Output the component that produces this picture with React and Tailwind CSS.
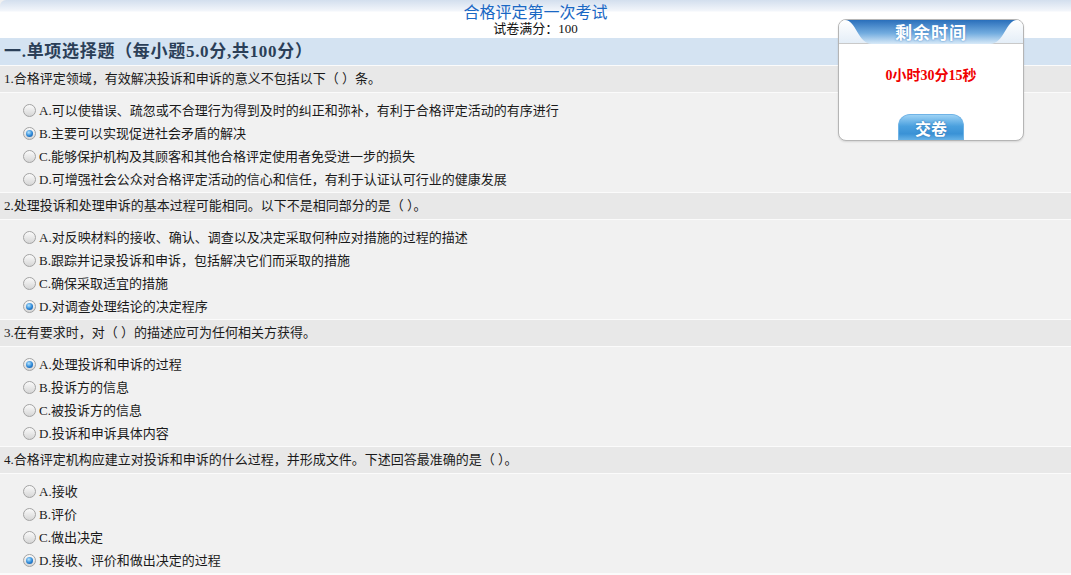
import React from "react";

const font = "font-['Liberation_Serif','Noto_Sans_CJK_SC',serif]";

const questions = [
  {
    title: "1.合格评定领域，有效解决投诉和申诉的意义不包括以下（ ）条。",
    answer: 1,
    options: [
      "A.可以使错误、疏忽或不合理行为得到及时的纠正和弥补，有利于合格评定活动的有序进行",
      "B.主要可以实现促进社会矛盾的解决",
      "C.能够保护机构及其顾客和其他合格评定使用者免受进一步的损失",
      "D.可增强社会公众对合格评定活动的信心和信任，有利于认证认可行业的健康发展",
    ],
  },
  {
    title: "2.处理投诉和处理申诉的基本过程可能相同。以下不是相同部分的是（ ）。",
    answer: 3,
    options: [
      "A.对反映材料的接收、确认、调查以及决定采取何种应对措施的过程的描述",
      "B.跟踪并记录投诉和申诉，包括解决它们而采取的措施",
      "C.确保采取适宜的措施",
      "D.对调查处理结论的决定程序",
    ],
  },
  {
    title: "3.在有要求时，对（ ）的描述应可为任何相关方获得。",
    answer: 0,
    options: [
      "A.处理投诉和申诉的过程",
      "B.投诉方的信息",
      "C.被投诉方的信息",
      "D.投诉和申诉具体内容",
    ],
  },
  {
    title: "4.合格评定机构应建立对投诉和申诉的什么过程，并形成文件。下述回答最准确的是（ ）。",
    answer: 3,
    options: ["A.接收", "B.评价", "C.做出决定", "D.接收、评价和做出决定的过程"],
  },
];

function Radio({ checked }) {
  return (
    <span className="w-[13px] h-[13px] rounded-full border border-[#a3a3a3] bg-[linear-gradient(to_bottom,#fafafa,#d6d6d6)] flex items-center justify-center shrink-0">
      {checked && (
        <span className="w-[7px] h-[7px] rounded-full bg-[radial-gradient(circle_at_40%_35%,#b8e6ff,#2a86d6_55%,#0d4690)]" />
      )}
    </span>
  );
}

function Question({ q }) {
  return (
    <div>
      <div className="h-[28px] bg-[#e8e8e8] border-y border-[#fbfbfb] flex items-center pl-[4px] text-[13px] text-[#1a1a1a]">
        {q.title}
      </div>
      <div className="bg-[#f1f1f1] pt-[6px] pb-[1px]">
        {q.options.map((o, i) => (
          <div key={i} className="h-[23px] flex items-center pl-[23px] gap-[3px] text-[13px] text-[#1a1a1a]">
            <Radio checked={i === q.answer} />
            <span>{o}</span>
          </div>
        ))}
      </div>
    </div>
  );
}

function Timer() {
  return (
    <div className="absolute top-[19px] left-[838px] w-[186px] h-[122px] bg-white border border-[#b5b5b5] rounded-[8px] overflow-hidden flex flex-col shadow-[0_1px_2px_rgba(0,0,0,0.12)]">
      <div className="relative h-[24px] shrink-0">
        <svg width="184" height="24" className="absolute inset-0">
          <defs>
            <linearGradient id="side" x1="0" y1="0" x2="0" y2="1">
              <stop offset="0" stopColor="#ffffff" />
              <stop offset="1" stopColor="#e3edf7" />
            </linearGradient>
            <linearGradient id="tab" x1="0" y1="0" x2="0" y2="1">
              <stop offset="0" stopColor="#2a6fbb" />
              <stop offset="0.55" stopColor="#72acdf" />
              <stop offset="1" stopColor="#d9eaf8" />
            </linearGradient>
          </defs>
          <rect x="0" y="0" width="184" height="24" fill="url(#side)" />
          <line x1="0" y1="23.5" x2="184" y2="23.5" stroke="#c9c9c9" />
          <path d="M6,0 C17,0 19,24 33,24 L151,24 C165,24 167,0 178,0 Z" fill="url(#tab)" />
        </svg>
        <div className="relative h-full flex items-center justify-center text-white font-bold text-[17px] tracking-[1px] font-['Noto_Sans_CJK_SC',sans-serif] [text-shadow:0_0_2px_#3a7fc4]">
          剩余时间
        </div>
      </div>
      <div className={`mt-[23px] text-center text-[14px] leading-[18px] font-bold text-[#f00000] ${font}`}>
        0小时30分15秒
      </div>
      <div className="flex-1 flex items-end justify-center">
        <div className="w-[66px] h-[26px] rounded-t-[12px] border border-b-0 border-[#6fb3e6] bg-[linear-gradient(to_bottom,#9dd2f5,#4aa0de_45%,#3a92d6_75%,#67b2e6)] flex items-center justify-center text-white font-bold text-[16px] font-['Noto_Sans_CJK_SC',sans-serif] [text-shadow:0_0_2px_#2d6fae]">
          交卷
        </div>
      </div>
    </div>
  );
}

export default function App() {
  return (
    <div className={`relative w-[1071px] min-h-[575px] bg-[#f1f1f1] ${font}`}>
      <div className="h-[38px] bg-[linear-gradient(to_bottom,#d3dfee_0px,#f3f6fb_11px,#ffffff_12px)] rounded-tl-[6px] flex flex-col items-center">
        <div className="pt-[3px] text-[16px] leading-[16px] text-[#1a68c4] font-['Noto_Sans_CJK_SC',sans-serif]">
          合格评定第一次考试
        </div>
        <div className="mt-[3px] text-[13px] leading-[13px] text-[#111]">试卷满分：100</div>
      </div>
      <div className="h-[27px] bg-[#d4e3f2] flex items-center pl-[4px] text-[17px] tracking-[0.7px] font-bold text-[#2b3f58]">
        一.单项选择题（每小题5.0分,共100分）
      </div>
      {questions.map((q, i) => (
        <Question key={i} q={q} />
      ))}
      <div className="h-[2px] bg-[#fbfbfb]" />
      <Timer />
    </div>
  );
}
